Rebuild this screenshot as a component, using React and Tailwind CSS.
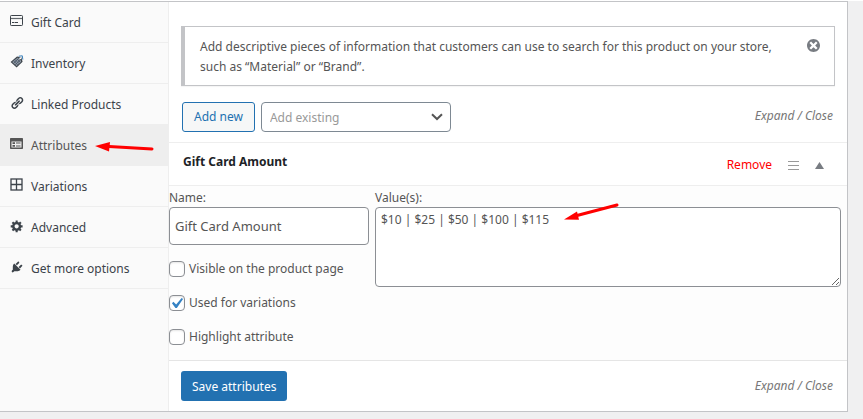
import React, { useState } from 'react';

const GiftCardIcon = () => (
    <svg viewBox="0 0 14 14" className="w-3.5 h-3.5" fill="none" stroke="currentColor" aria-hidden="true">
        <rect x="0.5" y="1.5" width="12" height="10" rx="0.8" />
        <path d="M1 4.500h11" strokeWidth="1.2" strokeOpacity="0.8" />
        <path d="M2 8.500h2M4.500 8.500h3.500" strokeWidth="1" />
    </svg>
);

const InventoryIcon = () => (
    <svg viewBox="0 0 14 14" className="w-3.5 h-3.5" aria-hidden="true">
        <path d="M.6 7 7 1.400 11.200 2.200 12.600 6.800 6.600 12.600z" fill="currentColor" />
        <path d="M2.200 7.100 7.200 2.800 10.200 3.400 11.200 6.700 6.600 11z" fill="#8f98a3" />
        <path d="M3.600 5.800 7.800 10M5 4.600 9.200 8.800M6.400 3.400 10.600 7.600M3.600 8.400 8.800 3M5.200 9.800 10.600 4.600" stroke="#4a5868" strokeWidth="0.8" />
        <path d="M8.800 1.200 12.300.8 12.800 4.600" fill="none" stroke="#2371b1" strokeWidth="0.9" />
        <circle cx="10.300" cy="3.200" r="0.9" fill="#fff" />
    </svg>
);

const LinkIcon = () => (
    <svg viewBox="0 0 20 20" className="w-3.5 h-3.5" fill="currentColor" aria-hidden="true">
        <path d="M17.74 2.76c1.68 1.69 1.68 4.41 0 6.1l-1.53 1.52c-1.12 1.12-2.7 1.47-4.14 1.09l2.62-2.61.76-.77.76-.76c.84-.84.84-2.2 0-3.04-.84-.85-2.2-.85-3.04 0l-.77.76-3.38 3.38c-.37-1.44-.02-3.02 1.1-4.14l1.52-1.53c1.69-1.68 4.42-1.68 6.1 0zM8.59 13.43l5.34-5.34c.42-.42.42-1.1 0-1.52-.44-.43-1.13-.39-1.53 0l-5.33 5.34c-.42.42-.42 1.1 0 1.52.44.43 1.13.39 1.52 0zm-.76 2.29l4.14-4.15c.38 1.44.03 3.02-1.09 4.14l-1.52 1.53c-1.69 1.68-4.41 1.68-6.1 0-1.68-1.68-1.68-4.42 0-6.1l1.53-1.52c1.12-1.12 2.7-1.47 4.14-1.1l-4.14 4.15c-.85.84-.85 2.2 0 3.05.84.84 2.2.84 3.04 0z" />
    </svg>
);

const AttributesIcon = () => (
    <svg viewBox="0 0 14 14" className="w-3.5 h-3.5" fill="currentColor" aria-hidden="true">
        <path fillRule="evenodd" d="M.8 1h11.400a.8.8 0 0 1 .8.8v9.400a.8.8 0 0 1-.8.8H.8a.8.8 0 0 1-.8-.8V1.800A.8.8 0 0 1 .8 1zM1.500 4.500v6h10v-6z" />
        <path d="M2.500 5.300h2.500v1.700H2.500zM2.500 8h2.500v1.700H2.500zM6 5.600h4.500v1H6zM6 8.400h4.500v1H6z" />
    </svg>
);

const VariationsIcon = () => (
    <svg viewBox="0 0 14 14" className="w-3.5 h-3.5" fill="none" stroke="currentColor" strokeWidth="1.3" aria-hidden="true">
        <rect x="1" y="1" width="11" height="11" />
        <path d="M6.500 1v11M1 6.500h11" />
    </svg>
);

const GearIcon = () => (
    <svg viewBox="0 0 20 20" className="w-3.5 h-3.5" fill="currentColor" aria-hidden="true">
        <path d="M18 12h-2.18c-.17.7-.44 1.35-.81 1.93l1.54 1.54-2.1 2.1-1.54-1.54c-.58.36-1.23.63-1.91.79V19H8v-2.18c-.68-.16-1.33-.43-1.91-.79l-1.54 1.54-2.12-2.12 1.54-1.54c-.36-.58-.63-1.23-.79-1.91H1V9.03h2.17c.16-.7.44-1.35.8-1.94L2.43 5.55l2.1-2.1 1.54 1.54c.58-.37 1.24-.64 1.93-.81V2h3v2.18c.68.16 1.33.43 1.91.79l1.54-1.54 2.12 2.12-1.54 1.54c.36.59.64 1.24.8 1.94H18V12zm-8.5 1.5c1.66 0 3-1.34 3-3s-1.34-3-3-3-3 1.34-3 3 1.34 3 3 3z" />
    </svg>
);

const PlugIcon = () => (
    <svg viewBox="0 0 20 20" className="w-3.5 h-3.5" fill="currentColor" aria-hidden="true">
        <path d="M13.11 4.36L9.87 7.6 8 5.73l3.24-3.24c.35-.34 1.05-.2 1.56.32.52.51.66 1.21.31 1.55zm-8 1.77l.91-1.12 9.01 9.01-1.19.84c-.71.71-2.63 1.16-3.82 1.16H6.14L4.9 17.26c-.59.59-1.54.59-2.12 0-.59-.58-.59-1.53 0-2.12l1.24-1.24v-3.88c0-1.13.4-3.19 1.09-3.89zm7.26 3.97l3.24-3.24c.34-.35 1.04-.21 1.55.31.52.51.66 1.21.31 1.55l-3.24 3.25z" />
    </svg>
);

const tabs = [
    { label: 'Gift Card', icon: GiftCardIcon },
    { label: 'Inventory', icon: InventoryIcon },
    { label: 'Linked Products', icon: LinkIcon },
    { label: 'Attributes', icon: AttributesIcon },
    { label: 'Variations', icon: VariationsIcon },
    { label: 'Advanced', icon: GearIcon },
    { label: 'Get more options', icon: PlugIcon },
];

const Sidebar = ({ active, onSelect }) => (
    <nav className="w-[169px] shrink-0 bg-[#fafafa] border-r border-[#eeeeee]">
        <ul>
            {tabs.map(({ label, icon: Icon }) => (
                <li key={label} className="relative">
                    <a
                        href="#"
                        onClick={(e) => { e.preventDefault(); onSelect(label); }}
                        className={`flex items-center gap-[7px] h-[41px] pt-0.5 pl-2.5 border-b border-[#eeeeee] ${active === label ? 'bg-[#eeeeee] text-[#555555]' : 'text-[#3c434a]'}`}
                    >
                        <span className="pb-1"><Icon /></span>
                        {label}
                    </a>
                    {label === 'Attributes' && (
                        <svg viewBox="0 0 60 12" className="absolute left-[95px] top-4 w-[60px] h-3" aria-hidden="true">
                            <path d="M14 5.500 57 8" stroke="#ff0000" strokeWidth="3" strokeLinecap="round" />
                            <path d="M0 5 15 1 14 10.500z" fill="#ff0000" />
                        </svg>
                    )}
                </li>
            ))}
        </ul>
    </nav>
);

const ExpandClose = () => (
    <span className="italic text-[#777777]">
        <a href="#">Expand</a> / <a href="#">Close</a>
    </span>
);

const Checkbox = ({ label, defaultChecked }) => (
    <label className="flex items-center gap-1 h-[34px]">
        <span className="relative flex">
            <input
                type="checkbox"
                defaultChecked={defaultChecked}
                className="peer appearance-none w-4 h-4 bg-white border border-[#8c8f94] rounded shadow-[inset_0_1px_2px_rgba(0,0,0,0.1)]"
            />
            <svg viewBox="3 3 15 13" className="absolute inset-0 w-4 h-4 hidden peer-checked:block pointer-events-none" aria-hidden="true">
                <path d="M14.83 4.89l1.34.94-5.81 8.38H9.02L5.78 9.67l1.34-1.25 2.57 2.4z" fill="#3582c4" />
            </svg>
        </span>
        {label}
    </label>
);

const App = () => {
    const [active, setActive] = useState('Attributes');
    const [values, setValues] = useState('$10 | $25 | $50 | $100 | $115');

    return (
        <div className="min-h-screen bg-[#f0f0f1] pr-[15px] font-['Noto_Sans','Open_Sans',sans-serif] text-xs leading-5 text-[#555555]">
            <div className="flex bg-white border-y border-r border-[#c3c4c7] mt-px">
                <Sidebar active={active} onSelect={setActive} />

                <main className="flex-1 min-w-0">
                    <div className="px-3 pt-6 pb-2.5 border-b border-[#eeeeee]">
                        <div className="flex items-start gap-3 border border-l-4 border-[#c3c4c7] pl-[15px] pr-3.5 pt-2.5 pb-2 shadow-[0_1px_1px_rgba(0,0,0,0.04)]">
                            <p className="flex-1">
                                Add descriptive pieces of information that customers can use to search for this product on your store, such as “Material” or “Brand”.
                            </p>
                            <button type="button" aria-label="Dismiss" className="text-[#787c82] pt-0.5">
                                <svg viewBox="2 2 16 16" className="w-[13px] h-[13px]" fill="currentColor" aria-hidden="true">
                                    <path d="M10 2c4.42 0 8 3.58 8 8s-3.58 8-8 8-8-3.58-8-8 3.58-8 8-8zm5 11l-3-3 3-3-2-2-3 3-3-3-2 2 3 3-3 3 2 2 3-3 3 3z" />
                                </svg>
                            </button>
                        </div>

                        <div className="flex items-center gap-1.5 pt-4 pl-px">
                            <button type="button" className="h-[30px] px-[11px] rounded-[3px] border border-[#2271b1] bg-[#f6f7f7] text-[#2271b1]">
                                Add new
                            </button>
                            <div className="relative">
                                <select aria-label="Add existing" className="appearance-none w-[190px] h-[30px] px-2 pt-px rounded border border-[#7e8993] bg-white text-[#999999]">
                                    <option>Add existing</option>
                                </select>
                                <svg viewBox="0 0 12 8" className="absolute right-2 top-[11px] w-3 h-2 pointer-events-none" fill="none" stroke="#555555" strokeWidth="2" aria-hidden="true">
                                    <path d="M1 1.200 6 6l5-4.800" />
                                </svg>
                            </div>
                            <div className="ml-auto pr-0.5 pb-0.5">
                                <ExpandClose />
                            </div>
                        </div>
                    </div>

                    <div className="flex items-center h-[43px] pt-0.5 pl-3.5 pr-[23px] border-b border-[#eeeeee]">
                        <h3 className="flex-1 pb-1.5 font-bold text-[#1d2327]">Gift Card Amount</h3>
                        <div className="flex items-center gap-4">
                            <a href="#" className="text-[#ff0000]">Remove</a>
                            <svg viewBox="0 0 11 10" className="w-[11px] h-2.5" stroke="#999999" aria-hidden="true">
                                <path d="M0 1.500h11M0 5.500h11M0 9.500h11" />
                            </svg>
                            <button type="button" aria-label="Toggle">
                                <svg viewBox="0 0 9 7" className="w-[9px] h-[7px]" fill="#787c82" aria-hidden="true">
                                    <path d="M4.500 0 9 7H0z" />
                                </svg>
                            </button>
                        </div>
                    </div>

                    <div className="flex gap-1.5 bg-[#fdfdfd] border-b border-[#e5e5e5] pt-[3px] pb-1.5 pr-1.5">
                        <div className="w-[200px] shrink-0">
                            <label htmlFor="attribute-name" className="block leading-[18px]">Name:</label>
                            <input
                                id="attribute-name"
                                type="text"
                                defaultValue="Gift Card Amount"
                                className="block w-full h-[38px] px-[5px] bg-white border border-[#8c8f94] rounded text-[13px]"
                            />
                            <div className="pt-[7px]">
                                <Checkbox label="Visible on the product page" />
                                <Checkbox label="Used for variations" defaultChecked />
                                <Checkbox label="Highlight attribute" />
                            </div>
                        </div>
                        <div className="relative flex-1">
                            <label htmlFor="attribute-values" className="block leading-[18px]">Value(s):</label>
                            <textarea
                                id="attribute-values"
                                value={values}
                                onChange={(e) => setValues(e.target.value)}
                                className="block w-full h-20 px-[5px] py-0.5 bg-white border border-[#8c8f94] rounded resize"
                            />
                            <svg viewBox="0 0 56 18" className="absolute left-[189px] top-3.5 w-14 h-[18px]" aria-hidden="true">
                                <path d="M13 12.500 53 2" stroke="#ff0000" strokeWidth="3" strokeLinecap="round" />
                                <path d="M0 16.500 13 8.500 15 16.800z" fill="#ff0000" />
                            </svg>
                        </div>
                    </div>

                    <div className="flex items-center justify-between pl-3 pr-3.5 py-2.5">
                        <button type="button" className="h-[30px] px-[11px] pt-px rounded-[3px] bg-[#2271b1] text-white">
                            Save attributes
                        </button>
                        <ExpandClose />
                    </div>
                </main>
            </div>
        </div>
    );
};

export default App;
